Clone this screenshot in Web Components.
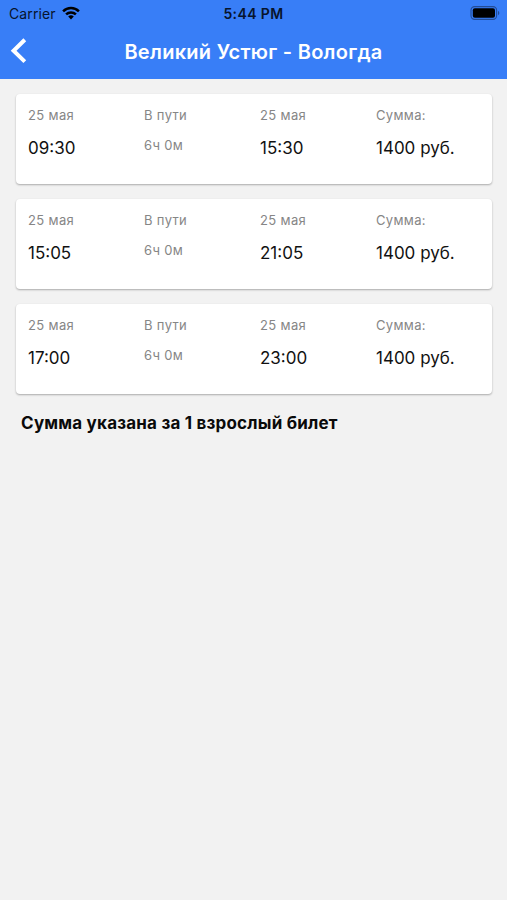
<!DOCTYPE html>
<html lang="ru">
<head>
<meta charset="utf-8">
<meta name="viewport" content="width=device-width, initial-scale=1">
<title>Великий Устюг - Вологда</title>
<style>
  body {
    margin: 0;
    min-height: 100vh;
    background: #f2f2f2;
    color: #111;
    font-family: Inter, "Liberation Sans", sans-serif;
  }
</style>
</head>
<body>
<trip-screen></trip-screen>

<script>
class StatusBar extends HTMLElement {
  constructor() {
    super();
    this.attachShadow({ mode: 'open' });
  }

  connectedCallback() {
    this.shadowRoot.innerHTML = `
      <style>
        :host {
          display: grid;
          grid-template-columns: 1fr auto 1fr;
          align-items: center;
          height: 26px;
          padding: 0 7px 0 9px;
          box-sizing: border-box;
          color: #07142c;
          font-size: 14px;
          line-height: 18px;
        }
        .carrier {
          display: flex;
          align-items: center;
          gap: 6px;
          letter-spacing: 0.1px;
        }
        .carrier span, .time { padding-top: 2px; }
        .time {
          margin-left: -2px;
          font-weight: 600;
          letter-spacing: 0.4px;
        }
        .battery {
          justify-self: end;
        }
        svg { display: block; }
      </style>
      <div class="carrier">
        <span>${this.getAttribute('carrier')}</span>
        <svg width="18" height="14" viewBox="0 0 18 14" fill="none" stroke="#000" stroke-width="2.5">
          <path d="M1.1 5.3a11.2 11.2 0 0 1 15.8 0"/>
          <path d="M4.1 8.4a7 7 0 0 1 9.8 0"/>
          <path d="M9 13.4 6.2 10.6a4 4 0 0 1 5.6 0z" fill="#000" stroke="none"/>
        </svg>
      </div>
      <div class="time">${this.getAttribute('time')}</div>
      <svg class="battery" width="30" height="14" viewBox="0 0 30 14">
        <rect x="1" y=".6" width="25.6" height="12.8" rx="3.6" fill="none" stroke="#234c96" stroke-width="1.1"/>
        <rect x="2.8" y="2.3" width="22.2" height="9.4" rx="2" fill="#000"/>
        <path d="M28 4.8c1.8.7 1.8 3.7 0 4.4z" fill="#234c96"/>
      </svg>
    `;
  }
}

class NavBar extends HTMLElement {
  constructor() {
    super();
    this.attachShadow({ mode: 'open' });
  }

  connectedCallback() {
    this.shadowRoot.innerHTML = `
      <style>
        :host {
          display: grid;
          grid-template-columns: 40px 1fr 40px;
          align-items: center;
          height: 53px;
          padding-bottom: 2px;
          box-sizing: border-box;
          color: #fff;
        }
        button {
          display: block;
          padding: 0 0 2px 10px;
          border: 0;
          background: none;
          color: inherit;
        }
        svg { display: block; }
        h1 {
          margin: 0;
          font-size: 20px;
          font-weight: 570;
          line-height: 26px;
          letter-spacing: 0.28px;
          text-align: center;
          white-space: nowrap;
        }
      </style>
      <button aria-label="Назад">
        <svg width="18" height="28" viewBox="0 0 18 28" fill="none" stroke="currentColor" stroke-width="4">
          <path d="M14.8 2.8 3.6 13.7l11.2 10.9"/>
        </svg>
      </button>
      <h1><slot></slot></h1>
    `;
  }
}

class TripCard extends HTMLElement {
  constructor() {
    super();
    this.attachShadow({ mode: 'open' });
  }

  connectedCallback() {
    const departure = this.getAttribute('departure');
    const arrival = this.getAttribute('arrival');

    this.shadowRoot.innerHTML = `
      <style>
        :host {
          display: grid;
          grid-template-columns: repeat(4, 116px);
          height: 90px;
          padding: 12px 0 0 12px;
          box-sizing: border-box;
          border-radius: 4px;
          background: #fff;
          box-shadow: 0 1px 2px rgba(0, 0, 0, 0.3);
          white-space: nowrap;
        }
        .label, .duration {
          color: #868686;
          font-size: 13px;
          line-height: 18px;
          letter-spacing: 0.35px;
        }
        .duration { margin-top: 12px; }
        .value {
          margin-top: 13px;
          font-size: 17px;
          line-height: 22px;
        }
      </style>
      <div>
        <div class="label">25 мая</div>
        <div class="value">${departure}</div>
      </div>
      <div>
        <div class="label">В пути</div>
        <div class="duration">6ч 0м</div>
      </div>
      <div>
        <div class="label">25 мая</div>
        <div class="value">${arrival}</div>
      </div>
      <div>
        <div class="label">Сумма:</div>
        <div class="value">1400 руб.</div>
      </div>
    `;
  }
}

class TripScreen extends HTMLElement {
  constructor() {
    super();
    this.attachShadow({ mode: 'open' });
  }

  connectedCallback() {
    this.shadowRoot.innerHTML = `
      <style>
        :host { display: block; }
        header { background: #387ef7; }
        main {
          display: flex;
          flex-direction: column;
          gap: 15px;
          padding: 15px 15px 0 16px;
        }
        p {
          margin: 3px 0 0 5px;
          color: #0a0a0a;
          font-size: 17px;
          font-weight: 700;
          line-height: 22px;
          letter-spacing: 0.2px;
          white-space: nowrap;
        }
      </style>
      <header>
        <status-bar carrier="Carrier" time="5:44 PM"></status-bar>
        <nav-bar>Великий Устюг - Вологда</nav-bar>
      </header>
      <main>
        <trip-card departure="09:30" arrival="15:30"></trip-card>
        <trip-card departure="15:05" arrival="21:05"></trip-card>
        <trip-card departure="17:00" arrival="23:00"></trip-card>
        <p>Сумма указана за 1 взрослый билет</p>
      </main>
    `;
  }
}

customElements.define('status-bar', StatusBar);
customElements.define('nav-bar', NavBar);
customElements.define('trip-card', TripCard);
customElements.define('trip-screen', TripScreen);
</script>
</body>
</html>
